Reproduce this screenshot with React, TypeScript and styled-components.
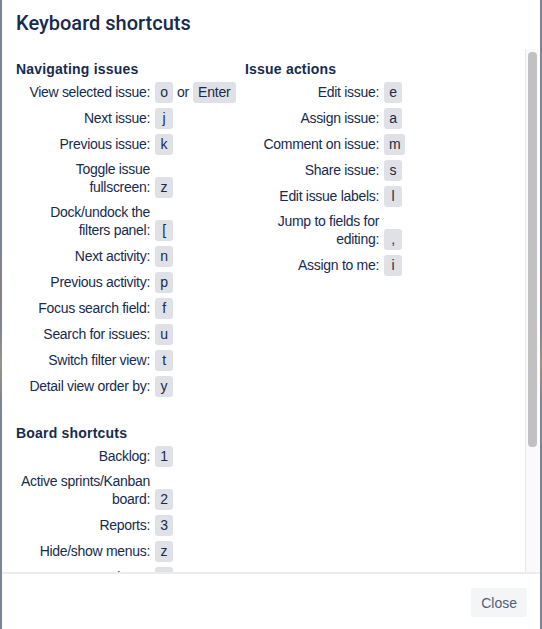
import React from "react";
import styled, { createGlobalStyle } from "styled-components";

const GlobalStyle = createGlobalStyle`
  html, body {
    margin: 0;
    padding: 0;
    overflow: hidden;
  }
  body {
    font-family: "Liberation Sans", Arial, sans-serif;
    color: #172b4d;
  }
`;

const Backdrop = styled.div`
  height: 629px;
  width: 542px;
  display: flex;
  padding: 0 2px;
  box-sizing: border-box;
  background: linear-gradient(
    to bottom,
    #7d8494 0%,
    #7d8494 40%,
    #8c7f86 46%,
    #7d8494 52%,
    #9a9486 58%,
    #7d8494 64%
  );
`;

const Dialog = styled.div`
  flex: 1;
  display: flex;
  flex-direction: column;
  background: #fff;
  min-width: 0;
`;

const Header = styled.div`
  height: 49px;
  box-sizing: border-box;
  padding: 11px 14px 0;
`;

const Title = styled.h2`
  margin: 0;
  font-family: Roboto, "Liberation Sans", Arial, sans-serif;
  font-size: 20px;
  line-height: 24px;
  font-weight: 500;
  color: #172b4d;
`;

const ScrollArea = styled.div`
  flex: 1;
  min-height: 0;
  display: flex;
  border-bottom: 2px solid #ebecf0;
`;

const Content = styled.div`
  flex: 1;
  min-width: 0;
  overflow: hidden;
  padding: 11px 0 0 14px;
`;

const Track = styled.div`
  width: 9px;
  padding: 3px 3px 0 2px;
  background: #fafafa;
  border-left: 1px solid #e8e8e8;
`;

const Thumb = styled.div`
  height: 395px;
  background: #c1c1c1;
  border-radius: 4px;
`;

const Columns = styled.div`
  display: grid;
  grid-template-columns: 229px 1fr;
  align-items: start;
`;

const Column = styled.div`
  display: flex;
  flex-direction: column;
  gap: 27px;
`;

const SectionTitle = styled.h3`
  margin: 0 0 4px;
  font-size: 14px;
  line-height: 18px;
  font-weight: 700;
  letter-spacing: 0.2px;
  color: #172b4d;
`;

const List = styled.dl`
  margin: 0;
  display: grid;
  grid-template-columns: 134px auto;
  column-gap: 5px;
  row-gap: 5px;
  align-items: last baseline;
`;

const Label = styled.dt`
  margin: 0;
  font-size: 14px;
  line-height: 18px;
  letter-spacing: -0.3px;
  text-align: right;
  color: #172b4d;
`;

const Keys = styled.dd`
  margin: 0;
  display: flex;
  align-items: baseline;
  gap: 4px;
  font-size: 14px;
  letter-spacing: -0.2px;
  color: #172b4d;
`;

const Key = styled.kbd`
  display: inline-block;
  min-width: 8px;
  padding: 2px 5px;
  line-height: 17px;
  font-family: inherit;
  font-size: 14px;
  text-align: center;
  background: #dfe1e6;
  border-radius: 3px;
  color: #172b4d;
`;

const Footer = styled.div`
  height: 55px;
  box-sizing: border-box;
  padding: 14px 13px 0;
  display: flex;
  justify-content: flex-end;
  align-items: flex-start;
`;

const Button = styled.button`
  height: 29px;
  padding: 0 10px;
  border: none;
  border-radius: 3px;
  background: #f4f5f7;
  color: #505f79;
  font-family: inherit;
  font-size: 14px;
  cursor: pointer;
`;

type Shortcut = { label: string; keys: string[] };
type Section = { title: string; items: Shortcut[] };

const navigating: Section = {
  title: "Navigating issues",
  items: [
    { label: "View selected issue:", keys: ["o", "Enter"] },
    { label: "Next issue:", keys: ["j"] },
    { label: "Previous issue:", keys: ["k"] },
    { label: "Toggle issue fullscreen:", keys: ["z"] },
    { label: "Dock/undock the filters panel:", keys: ["["] },
    { label: "Next activity:", keys: ["n"] },
    { label: "Previous activity:", keys: ["p"] },
    { label: "Focus search field:", keys: ["f"] },
    { label: "Search for issues:", keys: ["u"] },
    { label: "Switch filter view:", keys: ["t"] },
    { label: "Detail view order by:", keys: ["y"] },
  ],
};

const board: Section = {
  title: "Board shortcuts",
  items: [
    { label: "Backlog:", keys: ["1"] },
    { label: "Active sprints/Kanban board:", keys: ["2"] },
    { label: "Reports:", keys: ["3"] },
    { label: "Hide/show menus:", keys: ["z"] },
    { label: "Next column:", keys: ["n"] },
    { label: "Previous column:", keys: ["p"] },
    { label: "Send to top:", keys: ["t"] },
    { label: "Send to bottom:", keys: ["b"] },
  ],
};

const actions: Section = {
  title: "Issue actions",
  items: [
    { label: "Edit issue:", keys: ["e"] },
    { label: "Assign issue:", keys: ["a"] },
    { label: "Comment on issue:", keys: ["m"] },
    { label: "Share issue:", keys: ["s"] },
    { label: "Edit issue labels:", keys: ["l"] },
    { label: "Jump to fields for editing:", keys: [","] },
    { label: "Assign to me:", keys: ["i"] },
  ],
};

const ShortcutSection: React.FC<{ section: Section }> = ({ section }) => (
  <div>
    <SectionTitle>{section.title}</SectionTitle>
    <List>
      {section.items.map((item) => (
        <React.Fragment key={item.label}>
          <Label>{item.label}</Label>
          <Keys>
            {item.keys.map((k, i) => (
              <React.Fragment key={k + i}>
                {i > 0 && <span>or</span>}
                <Key>{k}</Key>
              </React.Fragment>
            ))}
          </Keys>
        </React.Fragment>
      ))}
    </List>
  </div>
);

const App: React.FC = () => (
  <>
    <GlobalStyle />
    <Backdrop>
      <Dialog>
        <Header>
          <Title>Keyboard shortcuts</Title>
        </Header>
        <ScrollArea>
          <Content>
            <Columns>
              <Column>
                <ShortcutSection section={navigating} />
                <ShortcutSection section={board} />
              </Column>
              <Column>
                <ShortcutSection section={actions} />
              </Column>
            </Columns>
          </Content>
          <Track>
            <Thumb />
          </Track>
        </ScrollArea>
        <Footer>
          <Button>Close</Button>
        </Footer>
      </Dialog>
    </Backdrop>
  </>
);

export default App;
